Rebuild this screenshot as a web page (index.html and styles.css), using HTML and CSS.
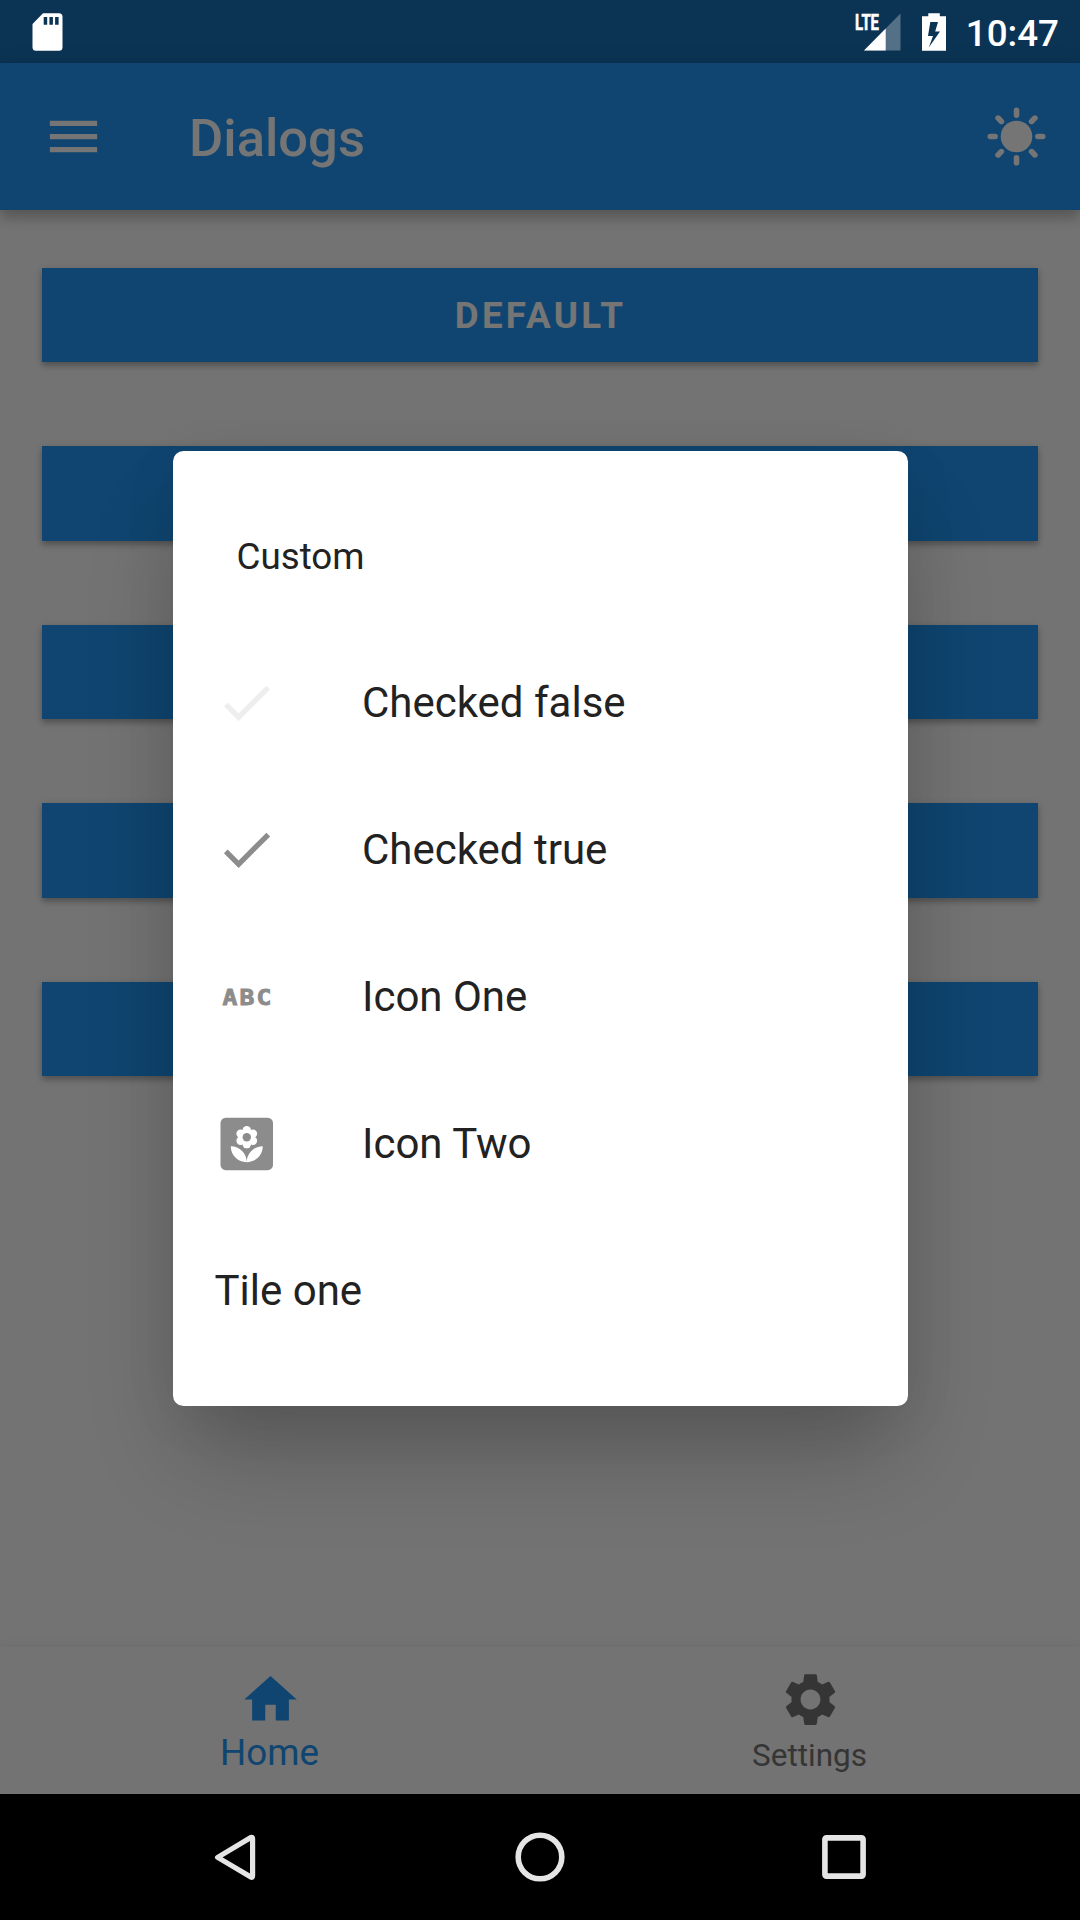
FILE: index.html
```html
<!DOCTYPE html>
<html lang="en">
<head>
<meta charset="utf-8">
<title>Dialogs</title>
<link rel="stylesheet" href="styles.css">
</head>
<body>
<div class="screen">
  <div class="status-space"></div>
  <header class="app-bar">
    <svg class="icon menu" viewBox="0 0 24 24"><path d="M3 18h18v-2H3v2zm0-5h18v-2H3v2zm0-7v2h18V6H3z"/></svg>
    <h1 class="title">Dialogs</h1>
    <svg class="sun" viewBox="-31.5 -31.5 63 63">
      <circle r="15.8"/>
      <path class="rays" d="M0-26.2v4.8M0 26.2v-4.8M-26.2 0h4.8M26.2 0h-4.8M-18.4-18.4l3.3 3.3M18.4-18.4l-3.3 3.3M-18.4 18.4l3.3-3.3M18.4 18.4l-3.3-3.3"/>
    </svg>
  </header>
  <main class="content">
    <button class="button">DEFAULT</button>
    <button class="button"></button>
    <button class="button"></button>
    <button class="button"></button>
    <button class="button"></button>
  </main>
  <nav class="tabs">
    <a class="tab active">
      <svg class="icon" viewBox="0 0 24 24"><path d="M10 20v-6h4v6h5v-8h3L12 3 2 12h3v8z"/></svg>
      <span class="tab-label">Home</span>
    </a>
    <a class="tab">
      <svg class="icon" viewBox="0 0 24 24"><path transform="translate(.4 .4) scale(.967)" d="M19.43 12.98c.04-.32.07-.64.07-.98s-.03-.66-.07-.98l2.11-1.65c.19-.15.24-.42.12-.64l-2-3.46c-.12-.22-.39-.3-.61-.22l-2.49 1c-.52-.4-1.08-.73-1.69-.98l-.38-2.65C14.46 2.18 14.25 2 14 2h-4c-.25 0-.46.18-.49.42l-.38 2.65c-.61.25-1.17.59-1.69.98l-2.49-1c-.23-.09-.49 0-.61.22l-2 3.46c-.13.22-.07.49.12.64l2.11 1.65c-.04.32-.07.65-.07.98s.03.66.07.98l-2.11 1.65c-.19.15-.24.42-.12.64l2 3.46c.12.22.39.3.61.22l2.49-1c.52.4 1.08.73 1.69.98l.38 2.65c.03.24.24.42.49.42h4c.25 0 .46-.18.49-.42l.38-2.65c.61-.25 1.17-.59 1.69-.98l2.49 1c.23.09.49 0 .61-.22l2-3.46c.12-.22.07-.49-.12-.64l-2.11-1.65zM12 15.9c-2.15 0-3.9-1.75-3.9-3.9S9.85 8.1 12 8.1s3.9 1.75 3.9 3.9-1.75 3.9-3.9 3.9z"/></svg>
      <span class="tab-label">Settings</span>
    </a>
  </nav>
  <div class="system-nav">
    <svg viewBox="0 0 60 60"><path d="M11 30.2 46.7 8.8Q48.6 8 48.6 10.2V50Q48.6 52.2 46.7 51.4L11 30.2Z" transform="translate(1.4 2.3) scale(.93)"/></svg>
    <svg viewBox="0 0 60 60"><circle cx="30" cy="30" r="21.8"/></svg>
    <svg viewBox="0 0 60 60"><rect x="10.9" y="10.9" width="38.2" height="38.2" rx="1.5"/></svg>
  </div>

  <div class="barrier">
    <section class="dialog">
      <div class="row heading">Custom</div>
      <div class="row">
        <svg class="icon unchecked" viewBox="0 0 24 24"><path d="M9 16.17 4.83 12l-1.42 1.41L9 19 21 7l-1.41-1.41z"/></svg>
        <span>Checked false</span>
      </div>
      <div class="row">
        <svg class="icon" viewBox="0 0 24 24"><path d="M9 16.17 4.83 12l-1.42 1.41L9 19 21 7l-1.41-1.41z"/></svg>
        <span>Checked true</span>
      </div>
      <div class="row">
        <svg class="icon" viewBox="0 0 63 63"><text class="abc" x="6.8" y="39.8" transform="scale(1.12 1)">ABC</text></svg>
        <span>Icon One</span>
      </div>
      <div class="row">
        <svg class="icon" viewBox="0 0 24 24">
          <rect x="2.1" y="2.15" width="20" height="20" rx="2"/>
          <g class="flower">
            <circle cx="12.1" cy="9.6" r="2.8"/>
            <circle cx="12.1" cy="6.95" r="1.6"/>
            <circle cx="12.1" cy="12.25" r="1.6"/>
            <circle cx="14.45" cy="8.25" r="1.6"/>
            <circle cx="14.45" cy="10.95" r="1.6"/>
            <circle cx="9.75" cy="8.25" r="1.6"/>
            <circle cx="9.75" cy="10.95" r="1.6"/>
            <path d="M12.1 19.1c0-3.35 2.7-6.05 6.1-6.05 0 3.35-2.7 6.05-6.1 6.05zM12.1 19.1c0-3.35-2.7-6.05-6.1-6.05 0 3.35 2.7 6.05 6.1 6.05z"/>
          </g>
          <circle cx="12.1" cy="9.6" r="1.6"/>
        </svg>
        <span>Icon Two</span>
      </div>
      <div class="row">Tile one</div>
    </section>
  </div>

  <div class="status-bar">
    <svg class="sd" viewBox="0 0 31 38"><path fill-rule="evenodd" d="M11 .3h16a3.5 3.5 0 0 1 3.5 3.5v30.4a3.5 3.5 0 0 1-3.5 3.5H4a3.5 3.5 0 0 1-3.5-3.5V11zM11.7 4v7.7h3.5V4zm5.7 0v7.7h3.5V4zm5.7 0v7.7h3.5V4z"/></svg>
    <svg class="signal" viewBox="0 0 46 38"><path class="faint" d="M45.5.5v37H9z"/><path d="M30.7 15.5v22H9z"/><text class="lte" x="0" y="16.6" textLength="24" lengthAdjust="spacingAndGlyphs">LTE</text></svg>
    <svg class="battery" viewBox="0 0 24 38"><path fill-rule="evenodd" d="M6.3.3h11.5v3H24v34.4H0V3.3h6.3zM8.3 9 6 23h5l-4.2 11.5L18 18.5h-4.8L16 9z"/></svg>
    <span class="clock">10:47</span>
  </div>
</div>
</body>
</html>
```
FILE: styles.css
```css
* { box-sizing: border-box; }

body {
  margin: 0;
  font-family: Roboto, sans-serif;
}

.screen {
  position: relative;
  display: flex;
  flex-direction: column;
  width: 1080px;
  height: 1920px;
  overflow: hidden;
  background: #fafafa;
}

.icon {
  flex: none;
  width: 63px;
  height: 63px;
  fill: currentColor;
}

.status-space {
  flex: none;
  height: 63px;
  background: #2196f3;
}

.app-bar {
  flex: none;
  display: flex;
  align-items: center;
  height: 147px;
  padding: 0 32px 0 42px;
  background: #2196f3;
  color: #fff;
  box-shadow: 0 8px 12px rgba(0, 0, 0, .2), 0 2px 20px rgba(0, 0, 0, .1);
}

.title {
  flex: 1;
  margin: 0 0 0 84px;
  padding-top: 2px;
  font-size: 52.5px;
  font-weight: 500;
  line-height: 62px;
}

.sun {
  width: 63px;
  height: 63px;
  fill: #fff;
}

.rays {
  stroke: #fff;
  stroke-width: 5.6;
  stroke-linecap: round;
}

.content {
  flex: 1;
  display: flex;
  flex-direction: column;
  gap: 84px;
  padding: 57.75px 42px 0;
}

.button {
  height: 94.5px;
  padding: 0 0 0 1px;
  border: 0;
  background: #2196f3;
  color: #fff;
  font: 700 36.75px Roboto, sans-serif;
  letter-spacing: 3.28px;
  box-shadow: 0 4px 6px rgba(0, 0, 0, .24), 0 1px 8px rgba(0, 0, 0, .1);
}

.tabs {
  flex: none;
  display: flex;
  height: 147px;
  background: #fafafa;
  box-shadow: 0 -1px 10px rgba(0, 0, 0, .06);
}

.tab {
  flex: 1;
  display: flex;
  flex-direction: column;
  align-items: center;
  padding-top: 21px;
  color: #757575;
  font-size: 31.5px;
}

.tab-label {
  padding-right: 1px;
  line-height: 49px;
}

.tab.active {
  color: #2196f3;
  font-size: 36.75px;
}

.tab.active .tab-label {
  line-height: 44px;
}

.system-nav {
  flex: none;
  display: flex;
  align-items: center;
  justify-content: center;
  gap: 244px;
  height: 126px;
}

.system-nav svg {
  width: 60px;
  height: 60px;
  fill: none;
  stroke: #e5e5e5;
  stroke-width: 5.6;
  stroke-linejoin: round;
}

/* The modal barrier dims the app between the screen top and the system bar. */
.barrier {
  position: absolute;
  inset: 0 0 126px;
  display: flex;
  align-items: center;
  justify-content: center;
  padding-top: 63px;
  background: rgba(0, 0, 0, .54);
}

.system-nav {
  position: relative;
  z-index: 1;
  background: #000;
}

.dialog {
  width: 735px;
  height: 955.5px;
  padding-top: 31.5px;
  border-radius: 10.5px;
  background: #fff;
  color: #222;
  box-shadow: 0 58px 90px -14px rgba(0, 0, 0, .24), 0 10px 60px rgba(0, 0, 0, .06);
}

.row {
  display: flex;
  align-items: center;
  gap: 84.5px;
  height: 147px;
  padding: 0 42px;
  font-size: 42px;
}

.heading {
  padding: 2px 64px 0;
  font-size: 36.75px;
}

.row .icon { color: #8c8c8c; }
.row .unchecked { color: #eee; }
.row .flower { fill: #fff; }

.abc {
  font: 700 22px "DejaVu Sans Mono", monospace;
  letter-spacing: 1.93px;
  stroke: currentColor;
  stroke-width: .9;
}

.status-bar {
  position: absolute;
  inset: 0 0 auto;
  display: flex;
  align-items: center;
  height: 63px;
  padding: 0 21px 0 32px;
  background: rgba(0, 0, 0, .25);
  color: #fff;
  fill: #fff;
}

.sd { width: 31px; height: 38px; margin-right: auto; }
.signal { width: 46px; height: 38px; margin-right: 21px; overflow: visible; }
.battery { width: 24px; height: 38px; margin-right: 20px; }
.faint { opacity: .3; }

.lte {
  font: 700 22px Roboto, sans-serif;
  stroke: #fff;
  stroke-width: .6;
}

.clock {
  font-size: 36.75px;
  font-weight: 500;
  line-height: 59px;
  padding-top: 4px;
}
```
